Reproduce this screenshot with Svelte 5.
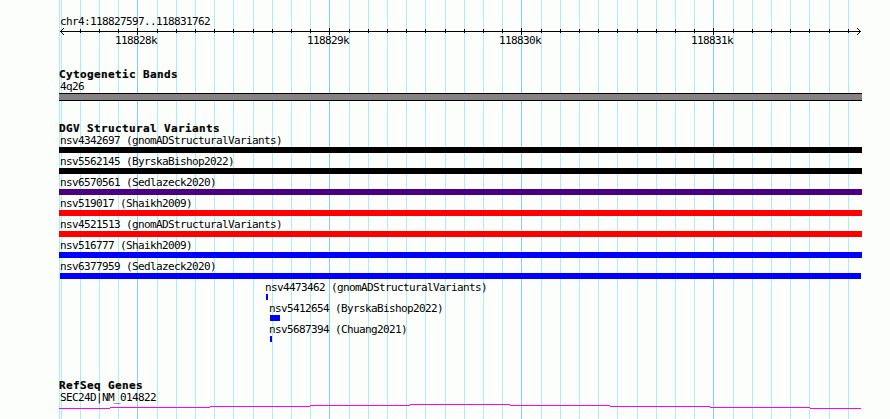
<script lang="ts">
	const LEFT = 59;

	// one grid line every 100 bases, 19.2px apart
	const gridLines = Array.from({ length: 42 }, (_, i) => ({
		x: Math.floor((610 + 192 * i) / 10),
		major: i % 10 === 4
	}));

	const axisLabels = ['118828k', '118829k', '118830k', '118831k'];

	const variants = [
		{ id: 'nsv4342697', study: 'gnomADStructuralVariants', start: 59, end: 862, color: '#000000' },
		{ id: 'nsv5562145', study: 'ByrskaBishop2022', start: 59, end: 862, color: '#000000' },
		{ id: 'nsv6570561', study: 'Sedlazeck2020', start: 59, end: 862, color: '#4b0082' },
		{ id: 'nsv519017', study: 'Shaikh2009', start: 59, end: 862, color: '#ff0000' },
		{ id: 'nsv4521513', study: 'gnomADStructuralVariants', start: 59, end: 862, color: '#ff0000' },
		{ id: 'nsv516777', study: 'Shaikh2009', start: 59, end: 862, color: '#0000ff' },
		{ id: 'nsv6377959', study: 'Sedlazeck2020', start: 60, end: 861, color: '#0000ff' },
		{ id: 'nsv4473462', study: 'gnomADStructuralVariants', start: 266, end: 268, color: '#0000ff' },
		{ id: 'nsv5412654', study: 'ByrskaBishop2022', start: 270, end: 280, color: '#0000ff' },
		{ id: 'nsv5687394', study: 'Chuang2021', start: 270, end: 272, color: '#0000ff' }
	];

	// labels of full-width features start at the panel edge
	function labelOffset(start: number) {
		return start <= 60 ? 1 : start - LEFT - 1;
	}
</script>

<div class="browser">
	<svg class="grid" width="890" height="419" shape-rendering="crispEdges">
		<rect class="minor" x="59" y="0" width="1" height="419" />
		{#each gridLines as line}
			<rect class={line.major ? 'major' : 'minor'} x={line.x} y="0" width="1" height="419" />
		{/each}
	</svg>

	<div class="panel">
		<header class="ruler">
			<div class="label">chr4:118827597..118831762</div>
			<svg class="axis" width="803" height="8" viewBox="59 28 803 8" shape-rendering="crispEdges">
				<rect x="60" y="31" width="801" height="1" />
				{#each gridLines.slice(1) as line}
					<rect x={line.x} y={line.major ? 28 : 29} width="1" height={line.major ? 7 : 4} />
				{/each}
				{#each [1, 2, 3] as n}
					<rect x={60 + n} y={31 - n} width="1" height="1" />
					<rect x={60 + n} y={31 + n} width="1" height="1" />
					<rect x={860 - n} y={31 - n} width="1" height="1" />
					<rect x={860 - n} y={31 + n} width="1" height="1" />
				{/each}
			</svg>
			<div class="axis-labels">
				{#each axisLabels as text}
					<span>{text}</span>
				{/each}
			</div>
		</header>

		<section class="cytobands">
			<h2>Cytogenetic Bands</h2>
			<div class="label">4q26</div>
			<div class="band"></div>
		</section>

		<section class="variants">
			<h2>DGV Structural Variants</h2>
			{#each variants as v}
				<div class="variant">
					<div class="name" style="margin-left: {labelOffset(v.start)}px">{v.id} ({v.study})</div>
					<div
						class="bar"
						style="margin-left: {v.start - LEFT}px; width: {v.end - v.start}px; background: {v.color}"
					></div>
				</div>
			{/each}
		</section>

		<section class="genes">
			<h2>RefSeq Genes</h2>
			<div class="label">SEC24D|NM_014822</div>
			<svg class="intron" width="803" height="6" viewBox="59 404 803 6" shape-rendering="crispEdges">
				<rect x="59" y="408" width="51" height="1" />
				<rect x="110" y="407" width="100" height="1" />
				<rect x="210" y="406" width="100" height="1" />
				<rect x="310" y="405" width="100" height="1" />
				<rect x="410" y="404" width="100" height="1" />
				<rect x="510" y="405" width="100" height="1" />
				<rect x="610" y="406" width="100" height="1" />
				<rect x="710" y="407" width="100" height="1" />
				<rect x="810" y="408" width="51" height="1" />
			</svg>
		</section>
	</div>
</div>

<style>
	:global(body) {
		background: #fcfefc;
	}

	.browser {
		position: relative;
		width: 890px;
		height: 419px;
		overflow: hidden;
		background: #fcfefc;
		color: #000;
		font-family: 'DejaVu Sans Mono', 'Liberation Mono', monospace;
		font-size: 11px;
		line-height: 12px;
		letter-spacing: -0.622px;
		white-space: nowrap;
	}

	.grid {
		position: absolute;
		top: 0;
		left: 0;
	}

	.minor {
		fill: #afeeee;
	}

	.major {
		fill: #87ceeb;
	}

	.panel {
		position: relative;
		width: 803px;
		margin-left: 59px;
		padding-top: 16px;
	}

	.label {
		height: 12px;
		padding-left: 1px;
	}

	.axis,
	.intron {
		display: block;
	}

	.axis-labels {
		display: flex;
		gap: 150px;
		height: 12px;
		margin-top: -1px;
		padding-left: 56px;
	}

	.axis-labels span {
		width: 42px;
	}

	h2 {
		height: 12px;
		margin: 0;
		font-size: 11px;
		line-height: 12px;
		font-weight: bold;
		letter-spacing: 0.378px;
		-webkit-text-stroke: 0.2px #000;
	}

	.cytobands {
		padding-top: 22px;
	}

	.band {
		height: 6px;
		border: solid #000;
		border-width: 1px 0;
		background: #848284;
	}

	.variants {
		padding-top: 22px;
	}

	.variant {
		height: 21px;
	}

	.name {
		height: 12px;
	}

	.bar {
		height: 6px;
	}

	.genes {
		padding-top: 35px;
	}

	.intron {
		fill: #ff00ff;
	}
</style>
